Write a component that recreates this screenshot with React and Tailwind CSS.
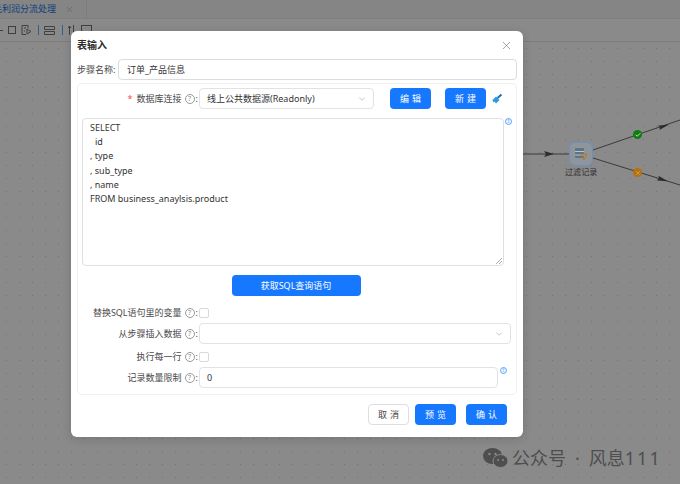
import { X, ChevronDown, Check } from 'lucide-react'

const font = "font-['Noto_Sans','Noto_Sans_CJK_SC',sans-serif]"

function Hint() {
  return (
    <span className="inline-flex w-[10px] h-[10px] items-center justify-center rounded-full border border-[#9a9a9a] text-[7px] leading-none text-[#8a8a8a] ml-[3px]">?</span>
  )
}

function InfoDot() {
  return (
    <span className="inline-flex w-[7px] h-[7px] rounded-full border border-[#5aa9f5] bg-[#e8f3ff] items-center justify-center text-[5px] leading-none text-[#2f8ff0]">!</span>
  )
}

function FieldLabel({ children, required }) {
  return (
    <div className="w-[121px] shrink-0 flex items-center justify-end pr-[1px] text-[9px] text-[#4a4a4a] whitespace-nowrap">
      {required && <span className="text-[#f04d4d] mr-[4px]">*</span>}
      {children}
      <Hint />
      <span className="ml-[1px]">:</span>
    </div>
  )
}

function Btn({ children, w = 'w-[41px] pl-[3px]' }) {
  return (
    <button className={`${w} h-[21px] rounded-[4px] bg-[#1677ff] text-white text-[9px] tracking-[3px]`}>{children}</button>
  )
}

function Broom() {
  return (
    <svg width="11" height="11" viewBox="0 0 11 11">
      <path d="M0.5 7 L4 3.5 L7.5 7 L4 10.5 L2.5 8.5 L1.5 9.5 Z" fill="#2b9ae0" />
      <path d="M5.5 5 L9.5 1.5" stroke="#1b6fc0" strokeWidth="2" />
    </svg>
  )
}

function Checkbox() {
  return <span className="w-[10px] h-[10px] rounded-[2px] border border-[#d9d9d9] bg-white" />
}

function Toolbar() {
  return (
    <div className="h-[23px] flex items-center border-b border-[#7c7c7c] text-[#3f3f3f]">
      <span className="w-[3px] h-[1px] bg-[#3f3f3f]" />
      <span className="ml-[5px] w-[8px] h-[8px] border border-[#3f3f3f]" />
      <svg className="ml-[5px]" width="11" height="10" viewBox="0 0 11 10" fill="none" stroke="#3f3f3f">
        <path d="M7 .5 H1 V9.5 H5 M7 .5 V3 M3 3 H5 M3 6 H4 M6 4 L10 6.5 L6 9 Z" />
      </svg>
      <span className="ml-[6px] h-[10px] border-r border-[#2f5f8f]" />
      <svg className="ml-[5px]" width="11" height="9" viewBox="0 0 11 9" fill="none" stroke="#3f3f3f">
        <path d="M.5 .5 H10.5 V3.5 H.5 Z M.5 5.5 H10.5 V8.5 H.5 Z" />
      </svg>
      <span className="ml-[7px] h-[10px] border-r border-[#2f5f8f]" />
      <svg className="ml-[5px]" width="7" height="10" viewBox="0 0 7 10" fill="none" stroke="#3f3f3f">
        <path d="M1.5 10 V1 M0 3 L1.5 1 L3 3 M5.5 0 V9" />
      </svg>
      <span className="ml-[6px] w-[11px] h-[10px] border border-[#3f3f3f]" />
    </div>
  )
}

function Background() {
  return (
    <div className="h-[484px] flex flex-col bg-[#8a8a8a]">
      <div className="h-[19px] flex items-center border-b border-[#7f7f7f] bg-[#858585]">
        <span className="text-[9px] text-[#0e3f7d] ml-[-7px] whitespace-nowrap">毛利润分流处理</span>
        <X size={9} strokeWidth={1.5} className="ml-[9px] text-[#5e5e5e]" />
        <span className="ml-[12px] h-full border-r border-[#7d7d7d]" />
      </div>
      <Toolbar />
      <div className="relative flex-1 bg-[radial-gradient(#727272_0.5px,transparent_0.7px)] bg-[size:13px_13px]">
        <svg className="absolute left-[523px] top-[71px]" width="157" height="120" viewBox="0 0 157 120" fill="none">
          <path d="M0 41 H46" stroke="#3a3a3a" />
          <path d="M21 38 L31 41 L21 44 L23 41 Z" fill="#2c2c2c" />
          <path d="M70 37 L157 7" stroke="#3a3a3a" />
          <path d="M146 11.5 L136.4 17 L137 14.5 L134.8 12.7 Z" fill="#2c2c2c" />
          <path d="M70 45 L157 72" stroke="#3a3a3a" />
          <path d="M145 68.3 L134 67.5 L136 65 L135.4 62.7 Z" fill="#2c2c2c" />
        </svg>
        <span className="absolute left-[633px] top-[88px] w-[9px] h-[9px] rounded-full bg-[#0f7d12] flex items-center justify-center">
          <Check size={6} strokeWidth={3} className="text-white" />
        </span>
        <span className="absolute left-[633px] top-[126px] w-[9px] h-[9px] rounded-full bg-[#b3720f] flex items-center justify-center">
          <X size={6} strokeWidth={2} className="text-[#d9c39a]" />
        </span>
        <div className="absolute left-[569px] top-[100px] w-[24px] h-[24px] rounded-[6px] border border-[#6f8fbc] bg-[#8f959c] flex items-center justify-center">
          <svg width="14" height="14" viewBox="0 0 14 14">
            <rect x="1" y="1" width="9" height="10" rx="1" fill="#5e7486" />
            <path d="M1 4.5 H10 M1 8 H10" stroke="#b8c2ca" />
            <path d="M7 7 H13 L10 13 Z" fill="none" stroke="#b57a1c" />
          </svg>
        </div>
        <span className="absolute left-[565px] top-[124px] text-[8px] tracking-[0.1px] text-[#2e2e2e] whitespace-nowrap">过滤记录</span>
      </div>
    </div>
  )
}

function Modal() {
  return (
    <div className="absolute left-[71px] top-[31px] w-[452px] h-[406px] rounded-[6px] bg-white shadow-[0_2px_10px_rgba(0,0,0,0.15)] flex flex-col px-[6px]">
      <div className="h-[28px] flex items-center justify-between">
        <span className="text-[10px] font-bold text-[#2b2b2b]">表输入</span>
        <X size={13} strokeWidth={1.2} className="text-[#777] mr-[4px]" />
      </div>
      <div className="flex items-center h-[21px]">
        <span className="w-[41px] shrink-0 text-[9px] text-[#4a4a4a] whitespace-nowrap">步骤名称:</span>
        <div className="flex-1 h-[21px] rounded-[4px] border border-[#dcdcdc] flex items-center px-[8px] text-[9px] text-[#333]">订单_产品信息</div>
      </div>
      <div className="mt-[3px] h-[312px] rounded-[5px] border border-[#f0f0f0] flex flex-col">
        <div className="flex items-center mt-[4px] h-[21px]">
          <FieldLabel required>数据库连接</FieldLabel>
          <div className="w-[175px] h-[21px] rounded-[4px] border border-[#e2e2e2] flex items-center justify-between pl-[7px] pr-[6px] text-[9px] text-[#333] whitespace-nowrap">
            线上公共数据源(Readonly)
            <ChevronDown size={10} className="text-[#bcbcbc]" />
          </div>
          <div className="ml-[16px] flex"><Btn>编辑</Btn></div>
          <div className="ml-[14px] flex"><Btn>新建</Btn></div>
          <div className="ml-[6px] flex"><Broom /></div>
        </div>
        <div className="flex mt-[9px] ml-[4px]">
          <div className="relative w-[422px] h-[148px] rounded-[4px] border border-[#e0e0e0] px-[7px] pt-[2px] text-[9px] leading-[14.2px] text-[#333]">
            <div>SELECT</div>
            <div className="pl-[5px]">id</div>
            <div>, type</div>
            <div>, sub_type</div>
            <div>, name</div>
            <div>FROM business_anaylsis.product</div>
            <svg className="absolute right-[1px] bottom-[1px]" width="6" height="6" viewBox="0 0 6 6"><path d="M0 6 L6 0 M3 6 L6 3" stroke="#888" strokeWidth="0.7" /></svg>
          </div>
          <div className="ml-[1px] flex self-start"><InfoDot /></div>
        </div>
        <div className="flex justify-center mt-[9px] pr-[2px]">
          <Btn w="w-[129px]"><span className="tracking-normal">获取SQL查询语句</span></Btn>
        </div>
        <div className="flex items-center mt-[11px] h-[11px]">
          <FieldLabel>替换SQL语句里的变量</FieldLabel>
          <Checkbox />
        </div>
        <div className="flex items-center mt-[5px] h-[21px]">
          <FieldLabel>从步骤插入数据</FieldLabel>
          <div className="w-[312px] h-[21px] rounded-[4px] border border-[#e2e2e2] flex items-center justify-end pr-[6px]">
            <ChevronDown size={10} className="text-[#bcbcbc]" />
          </div>
        </div>
        <div className="flex items-center mt-[7px] h-[11px]">
          <FieldLabel>执行每一行</FieldLabel>
          <Checkbox />
        </div>
        <div className="flex items-center mt-[5px]">
          <FieldLabel>记录数量限制</FieldLabel>
          <div className="w-[299px] h-[21px] rounded-[4px] border border-[#e2e2e2] flex items-center px-[7px] text-[9px] text-[#333]">0</div>
          <div className="ml-[2px] flex self-start"><InfoDot /></div>
        </div>
      </div>
      <div className="flex justify-end mt-[9px] pr-[10px]">
        <button className="w-[41px] h-[21px] pl-[3px] rounded-[4px] border border-[#dedede] bg-white text-[9px] tracking-[3px] text-[#444]">取消</button>
        <div className="ml-[6px] flex"><Btn>预览</Btn></div>
        <div className="ml-[10px] flex"><Btn>确认</Btn></div>
      </div>
    </div>
  )
}

export default function App() {
  return (
    <div className={`relative w-[680px] h-[484px] overflow-hidden ${font}`}>
      <Background />
      <Modal />
      <div className="absolute left-[483px] top-[445px] flex items-center gap-[4px] text-[18px] text-[#4e4e4e] whitespace-nowrap">
        <svg width="25" height="21" viewBox="0 0 25 21">
          <ellipse cx="9.5" cy="8" rx="9.5" ry="8" fill="#4e4e4e" />
          <ellipse cx="17.5" cy="13" rx="7.5" ry="6.5" fill="#4e4e4e" stroke="#8a8a8a" />
          <circle cx="6.5" cy="6" r="1.2" fill="#8a8a8a" />
          <circle cx="12.5" cy="6" r="1.2" fill="#8a8a8a" />
          <circle cx="15" cy="12" r="1" fill="#8a8a8a" />
          <circle cx="20" cy="12" r="1" fill="#8a8a8a" />
        </svg>
        <span>公众号<span className="mx-[9px]">·</span>风息<span className="tracking-[2px]">111</span></span>
      </div>
    </div>
  )
}
